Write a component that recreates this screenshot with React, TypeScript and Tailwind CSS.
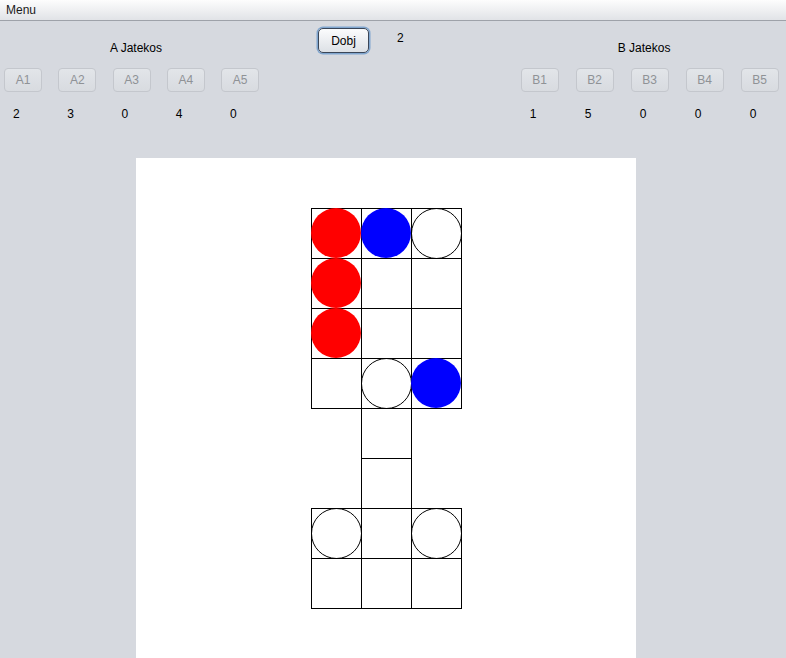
import React from "react";

const font = { fontFamily: '"Liberation Sans", Arial, sans-serif' };

function DisabledBtn({ label }: { label: string }) {
  return (
    <div className="w-[38px] h-[24px] rounded-[4px] border border-[#c4c7cd] bg-gradient-to-b from-[#e2e5e9] to-[#d8dbe0] flex items-center justify-center text-[12px] text-[#8f9296]">
      {label}
    </div>
  );
}

function Player({
  title,
  titleOffset,
  prefix,
  values,
  pitch,
}: {
  title: string;
  titleOffset: string;
  prefix: string;
  values: number[];
  pitch: string;
}) {
  return (
    <div className="flex flex-col">
      <div className={`h-[14px] leading-[14px] text-[12px] text-black mt-[20px] ${titleOffset}`}>{title}</div>
      <div className={`grid ${pitch} mt-[13px]`}>
        {values.map((_, i) => (
          <DisabledBtn key={i} label={`${prefix}${i + 1}`} />
        ))}
      </div>
      <div className={`grid ${pitch} mt-[15px]`}>
        {values.map((v, i) => (
          <div key={i} className="pl-[9px] h-[14px] leading-[14px] text-[12px] text-black">
            {v}
          </div>
        ))}
      </div>
    </div>
  );
}

type Piece = "red" | "blue" | "empty";
const rowsCells: number[][] = [
  [0, 1, 2],
  [0, 1, 2],
  [0, 1, 2],
  [0, 1, 2],
  [1],
  [1],
  [0, 1, 2],
  [0, 1, 2],
];
const pieces: { r: number; c: number; p: Piece }[] = [
  { r: 0, c: 0, p: "red" },
  { r: 0, c: 1, p: "blue" },
  { r: 0, c: 2, p: "empty" },
  { r: 1, c: 0, p: "red" },
  { r: 2, c: 0, p: "red" },
  { r: 3, c: 1, p: "empty" },
  { r: 3, c: 2, p: "blue" },
  { r: 6, c: 0, p: "empty" },
  { r: 6, c: 2, p: "empty" },
];

function Board() {
  return (
    <svg width={151} height={401} viewBox="0 0 151 401" shapeRendering="crispEdges">
      {rowsCells.map((cols, r) =>
        cols.map((c) => (
          <rect
            key={`${r}-${c}`}
            x={c * 50 + 0.5}
            y={r * 50 + 0.5}
            width={50}
            height={50}
            fill="none"
            stroke="#000"
            strokeWidth={1}
          />
        ))
      )}
      {pieces.map(({ r, c, p }) =>
        p === "empty" ? (
          <circle
            key={`p${r}-${c}`}
            cx={c * 50 + 25.5}
            cy={r * 50 + 25.5}
            r={25}
            fill="none"
            stroke="#000"
            strokeWidth={1}
            shapeRendering="auto"
          />
        ) : (
          <circle
            key={`p${r}-${c}`}
            cx={c * 50 + 25}
            cy={r * 50 + 25}
            r={25}
            fill={p === "red" ? "#ff0000" : "#0000ff"}
            shapeRendering="auto"
          />
        )
      )}
    </svg>
  );
}

export default function App() {
  return (
    <div className="w-full h-[658px] overflow-hidden bg-[#d6d9df] flex flex-col" style={font}>
      <div className="h-[21px] shrink-0 border-b border-[#9ea2a9] bg-gradient-to-b from-[#fdfdfd] to-[#e1e3e7] flex items-center pl-[6px] text-[12px] text-[#1a1a1a]">
        Menu
      </div>
      <div className="h-[137px] shrink-0 flex items-start overflow-hidden">
        <div className="w-[314px] shrink-0 pl-[4px]">
          <Player
            title="A Jatekos"
            titleOffset="pl-[106px]"
            prefix="A"
            values={[2, 3, 0, 4, 0]}
            pitch="grid-cols-[repeat(5,54.25px)]"
          />
        </div>
        <div className="shrink-0 ml-[4px] mt-[7px] w-[51px] h-[25px] rounded-[5px] border border-[#3a4658] bg-gradient-to-b from-[#fbfcfd] to-[#dde1e6] shadow-[0_0_0_1.5px_#80a6cf] flex items-center justify-center text-[12px] text-black">
          Dobj
        </div>
        <div className="shrink-0 ml-[28px] mt-[10px] h-[14px] leading-[14px] text-[12px] text-black">2</div>
        <div className="shrink-0 ml-[117px]">
          <Player
            title="B Jatekos"
            titleOffset="pl-[97px]"
            prefix="B"
            values={[1, 5, 0, 0, 0]}
            pitch="grid-cols-[repeat(5,55px)]"
          />
        </div>
      </div>
      <div className="pl-[136px]">
        <div className="w-[500px] h-[500px] bg-white pt-[50px] pl-[175px]">
          <Board />
        </div>
      </div>
    </div>
  );
}
